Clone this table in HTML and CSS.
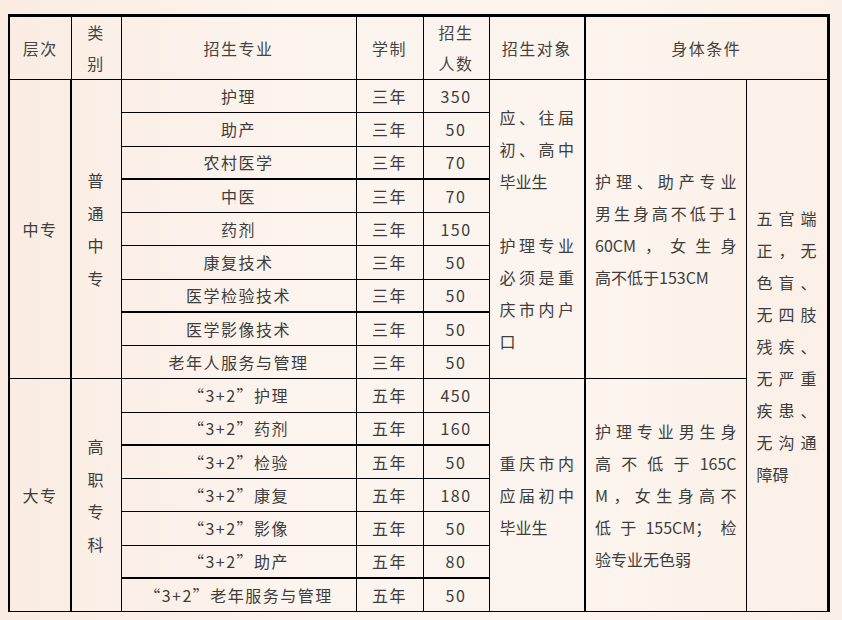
FILE: index.html
```html
<!DOCTYPE html>
<html lang="zh-CN">
<head>
<meta charset="utf-8">
<title>招生计划</title>
<link rel="stylesheet" href="styles.css">
</head>
<body>
<table class="plan">
  <colgroup>
    <col class="c-level"><col class="c-type"><col class="c-major"><col class="c-years"><col class="c-num"><col class="c-target"><col class="c-cond1"><col class="c-cond2">
  </colgroup>
  <thead>
    <tr class="head">
      <th>层次</th>
      <th class="stack">类<br>别</th>
      <th>招生专业</th>
      <th>学制</th>
      <th class="stack">招生<br>人数</th>
      <th>招生对象</th>
      <th colspan="2" class="bl2">身体条件</th>
    </tr>
  </thead>
  <tbody>
    <tr>
      <td rowspan="9" class="br2">中专</td>
      <td rowspan="9" class="stack">普<br>通<br>中<br>专</td>
      <td>护理</td><td>三年</td><td>350</td>
      <td rowspan="9" class="para">
        <span class="ln j">应、往届</span>
        <span class="ln j">初、高中</span>
        <span class="ln">毕业生</span>
        <span class="ln">&nbsp;</span>
        <span class="ln j">护理专业</span>
        <span class="ln j">必须是重</span>
        <span class="ln j">庆市内户</span>
        <span class="ln">口</span>
      </td>
      <td rowspan="9" class="para bl2 tight">
        <span class="ln j">护理、助产专业</span>
        <span class="ln j">男生身高不低于1</span>
        <span class="ln j">60CM，女生身</span>
        <span class="ln">高不低于153CM</span>
      </td>
      <td rowspan="16" class="para br2">
        <span class="ln j">五官端</span>
        <span class="ln j">正，无</span>
        <span class="ln j">色盲、</span>
        <span class="ln j">无四肢</span>
        <span class="ln j">残疾、</span>
        <span class="ln j">无严重</span>
        <span class="ln j">疾患、</span>
        <span class="ln j">无沟通</span>
        <span class="ln">障碍</span>
      </td>
    </tr>
    <tr><td>助产</td><td>三年</td><td>50</td></tr>
    <tr><td>农村医学</td><td>三年</td><td>70</td></tr>
    <tr class="thick"><td>中医</td><td>三年</td><td>70</td></tr>
    <tr><td>药剂</td><td>三年</td><td>150</td></tr>
    <tr><td>康复技术</td><td>三年</td><td>50</td></tr>
    <tr><td>医学检验技术</td><td>三年</td><td>50</td></tr>
    <tr class="thick"><td>医学影像技术</td><td>三年</td><td>50</td></tr>
    <tr><td>老年人服务与管理</td><td>三年</td><td>50</td></tr>
    <tr>
      <td rowspan="7" class="br2">大专</td>
      <td rowspan="7" class="stack">高<br>职<br>专<br>科</td>
      <td>“3+2”护理</td><td>五年</td><td>450</td>
      <td rowspan="7" class="para">
        <span class="ln j">重庆市内</span>
        <span class="ln j">应届初中</span>
        <span class="ln">毕业生</span>
      </td>
      <td rowspan="7" class="para bl2 tight">
        <span class="ln j">护理专业男生身</span>
        <span class="ln j">高不低于165C</span>
        <span class="ln j">M，女生身高不</span>
        <span class="ln j">低于155CM；检</span>
        <span class="ln">验专业无色弱</span>
      </td>
    </tr>
    <tr><td>“3+2”药剂</td><td>五年</td><td>160</td></tr>
    <tr class="thick"><td>“3+2”检验</td><td>五年</td><td>50</td></tr>
    <tr><td>“3+2”康复</td><td>五年</td><td>180</td></tr>
    <tr><td>“3+2”影像</td><td>五年</td><td>50</td></tr>
    <tr><td>“3+2”助产</td><td>五年</td><td>80</td></tr>
    <tr class="thick"><td>“3+2”老年服务与管理</td><td>五年</td><td>50</td></tr>
  </tbody>
</table>
</body>
</html>
```

FILE: styles.css
```css
html, body {
  margin: 0;
  padding: 0;
}

body {
  width: 842px;
  height: 620px;
  overflow: hidden;
  background: linear-gradient(to right, #faece2 0%, #fcf4ee 35%, #fcf5ef 65%, #fbf0e7 100%);
  font-family: "Noto Sans CJK SC", "Noto Sans", sans-serif;
  font-size: 16px;
  color: #3d3d3d;
  padding: 14px 0 0 8px;
  box-sizing: border-box;
}

.plan {
  border-collapse: collapse;
  table-layout: fixed;
  width: 819px;
  border-top: 3px solid #000;
  border-left: 2px solid #000;
  border-right: 3px solid #000;
  border-bottom: 1px solid #000;
}

.c-level { width: 62px; }
.c-type { width: 50px; }
.c-major { width: 235px; }
.c-years { width: 67px; }
.c-num { width: 66px; }
.c-target { width: 96px; }
.c-cond1 { width: 161px; }
.c-cond2 { width: 82px; }

.plan th,
.plan td {
  border: 1px solid #000;
  padding: 0;
  text-align: center;
  vertical-align: middle;
  font-weight: normal;
  letter-spacing: 1.5px;
  line-height: 20px;
}

.plan th {
  color: #444;
}

.head {
  height: 64px;
}

.plan th.stack {
  line-height: 31px;
}

.plan tbody tr {
  height: 33.25px;
}

.plan tr.thick td {
  border-top-width: 2px;
}

.plan td.stack {
  line-height: 32.5px;
}

.plan .br2 {
  border-right-width: 2px;
}

.plan .bl2 {
  border-left-width: 2px;
}

.plan td.para {
  text-align: left;
  line-height: 32px;
  padding: 0 10px;
  letter-spacing: 0;
}

.plan td.tight {
  padding: 0 9px;
}

.ln {
  display: block;
  white-space: nowrap;
}

.ln.j {
  text-align: justify;
  text-align-last: justify;
  white-space: normal;
}
```
